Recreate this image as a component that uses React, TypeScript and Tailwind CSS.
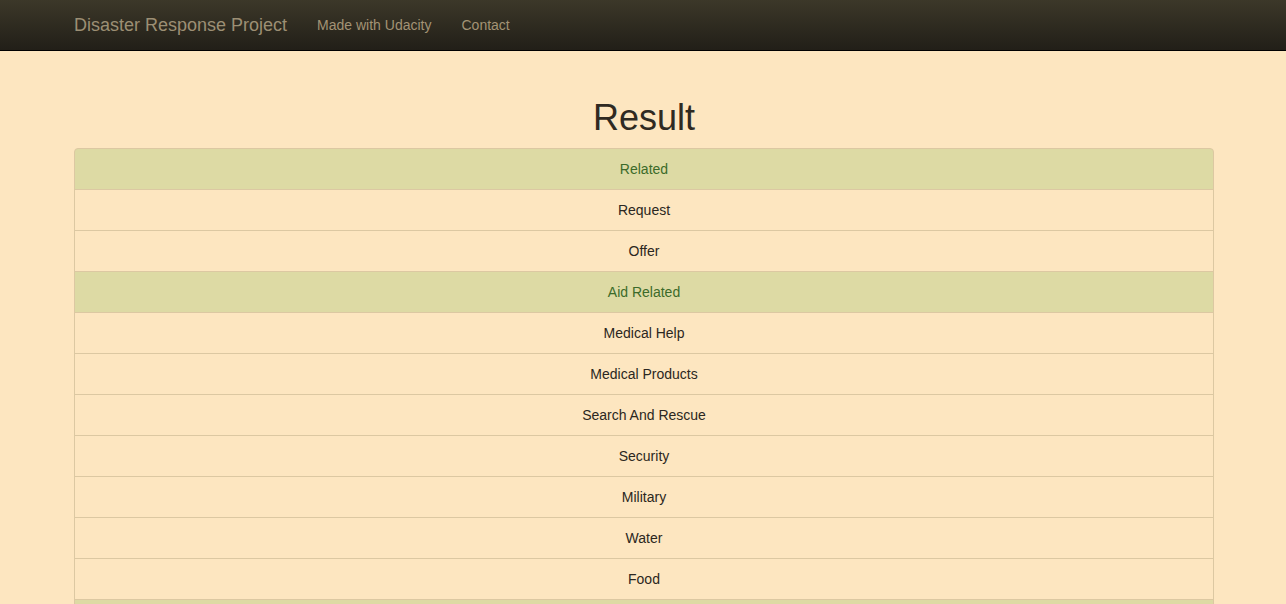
const categories: { name: string; hit: boolean }[] = [
  { name: 'Related', hit: true },
  { name: 'Request', hit: false },
  { name: 'Offer', hit: false },
  { name: 'Aid Related', hit: true },
  { name: 'Medical Help', hit: false },
  { name: 'Medical Products', hit: false },
  { name: 'Search And Rescue', hit: false },
  { name: 'Security', hit: false },
  { name: 'Military', hit: false },
  { name: 'Water', hit: false },
  { name: 'Food', hit: false },
  { name: 'Shelter', hit: true },
  { name: 'Clothing', hit: false },
  { name: 'Money', hit: false },
];

export default function App() {
  return (
    <div className="min-h-screen bg-[#fde6c0] text-[#2f2a22]" style={{ fontFamily: '"Liberation Sans", Arial, sans-serif' }}>
      {/* navbar */}
      <nav className="h-[51px] border-b border-black bg-gradient-to-b from-[#3c3829] to-[#221f18]">
        <div className="w-[1170px] mx-auto pl-[16px] pr-[14px] flex items-center h-[50px]">
          <a className="text-[18px] leading-[20px] text-[#9c8f74] mr-[15px]">Disaster Response Project</a>
          <a className="px-[15px] text-[14px] leading-[20px] text-[#a39375]">Made with Udacity</a>
          <a className="px-[15px] text-[14px] leading-[20px] text-[#a39375]">Contact</a>
        </div>
      </nav>

      <div className="w-[1170px] mx-auto pl-[16px] pr-[14px] pt-[47px]">
        <h1 className="text-center text-[36px] leading-[40px] mb-[10px] text-[#2f2a22]">Result</h1>

        <ul>
          {categories.map((c, i) => (
            <li
              key={c.name}
              className={
                'text-center text-[14px] leading-[20px] py-[10px] px-[15px] border border-[#dcc8a2] -mb-px ' +
                (i === 0 ? 'rounded-t-[4px] ' : '') +
                (c.hit ? 'bg-[#dddaa4] text-[#3c6b2a]' : 'bg-[#fde6c0] text-[#2b2721]')
              }
            >
              {c.name}
            </li>
          ))}
        </ul>
      </div>
    </div>
  );
}
